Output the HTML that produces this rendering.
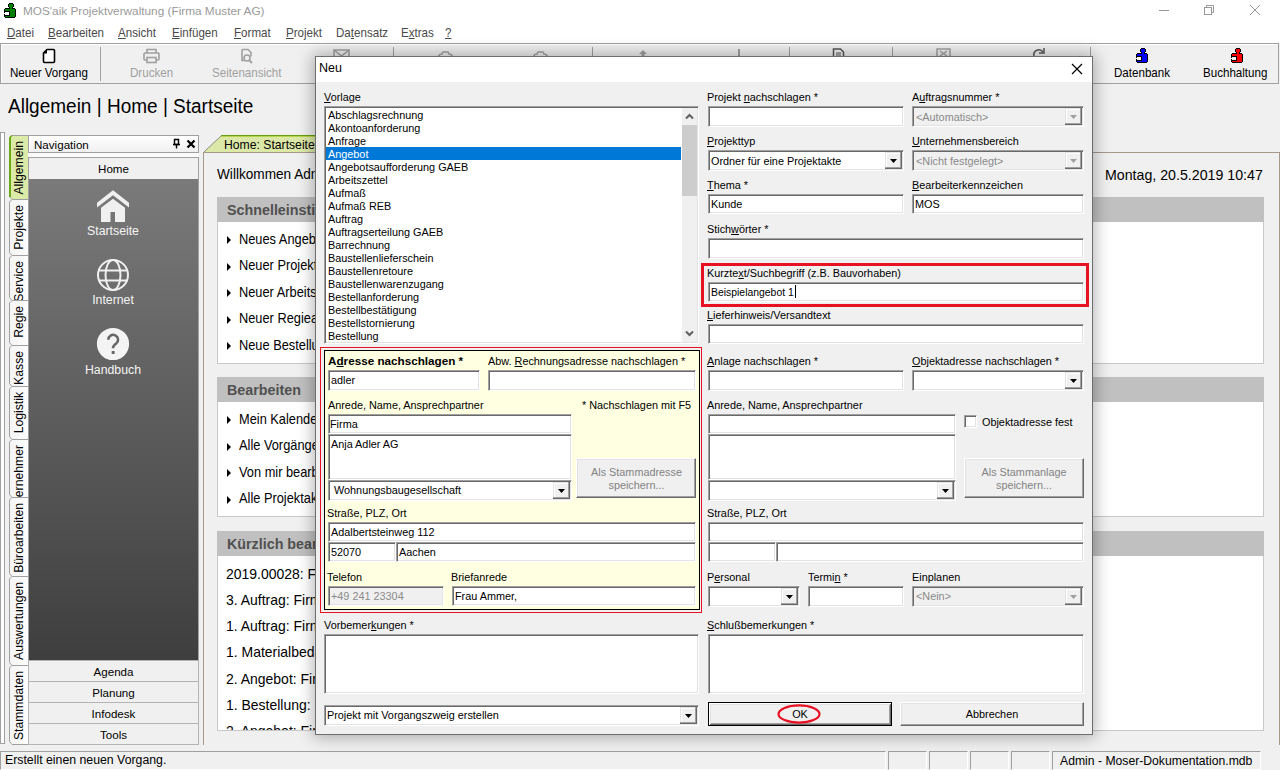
<!DOCTYPE html><html><head><meta charset="utf-8"><style>
*{margin:0;padding:0;box-sizing:border-box}
html,body{width:1280px;height:770px;overflow:hidden;background:#f0f0f0;font-family:"Liberation Sans",sans-serif;position:relative}
.a{position:absolute}
.t{position:absolute;white-space:nowrap}
.t u{text-decoration:underline;text-underline-offset:1px}
.sk{position:absolute;border:1px solid;border-color:#a0a0a0 #fff #fff #a0a0a0;box-shadow:inset 1px 1px 0 #696969, inset -1px -1px 0 #e3e3e3}
.cb{position:absolute;background:#f0f0f0;box-shadow:inset -1px -1px 0 #696969, inset -2px -2px 0 #a0a0a0, inset 1px 1px 0 #e3e3e3, inset 2px 2px 0 #fff}
.btn{position:absolute;background:#f0f0f0;border:1px solid}
</style></head><body>
<div class="a" style="left:0px;top:0px;width:1280px;height:22px;background:#fff"></div>
<svg class="a" style="left:4px;top:3px" width="12" height="15" viewBox="0 0 12 15" shape-rendering="crispEdges">
<path d="M5 0h4v1h1v3h-1v1h2v1h1v8h-1v1h-10v-1h-1v-8h1v-1h4v-1h-1v-3h1z" fill="#000"/>
<rect x="5" y="1" width="4" height="3" fill="#008000"/><rect x="6" y="4" width="2" height="2" fill="#008000"/><rect x="1" y="6" width="10" height="8" fill="#008000"/>
<rect x="1" y="8" width="5" height="5" fill="#000"/><rect x="1" y="9" width="4" height="3" fill="#fff"/><rect x="0" y="10" width="1" height="1" fill="#fff"/></svg>
<div class="t" style="left:23px;top:6.01px;font-size:11.8px;line-height:11.8px;color:#9a9a9a;">MOS'aik Projektverwaltung (Firma Muster AG)</div>
<div class="a" style="left:1159px;top:10px;width:10px;height:1px;background:#999"></div>
<svg class="a" style="left:1203px;top:4px" width="13" height="13" viewBox="0 0 13 13">
<rect x="1.5" y="3.5" width="7" height="7" fill="none" stroke="#999"/><path d="M3.5 3.5v-2h7v7h-2" fill="none" stroke="#999"/></svg>
<svg class="a" style="left:1249px;top:4px" width="13" height="13" viewBox="0 0 13 13">
<path d="M1 1L11 11M11 1L1 11" stroke="#999" stroke-width="1"/></svg>
<div class="a" style="left:0px;top:22px;width:1280px;height:21px;background:#fff"></div>
<div class="t" style="left:7px;top:26.67px;font-size:12.2px;line-height:12.2px;color:#4a4a4a;transform:scaleX(0.95);transform-origin:0 0"><u>D</u>atei</div>
<div class="t" style="left:48px;top:26.67px;font-size:12.2px;line-height:12.2px;color:#4a4a4a;transform:scaleX(0.95);transform-origin:0 0"><u>B</u>earbeiten</div>
<div class="t" style="left:118px;top:26.67px;font-size:12.2px;line-height:12.2px;color:#4a4a4a;transform:scaleX(0.95);transform-origin:0 0"><u>A</u>nsicht</div>
<div class="t" style="left:172px;top:26.67px;font-size:12.2px;line-height:12.2px;color:#4a4a4a;transform:scaleX(0.95);transform-origin:0 0"><u>E</u>infügen</div>
<div class="t" style="left:234px;top:26.67px;font-size:12.2px;line-height:12.2px;color:#4a4a4a;transform:scaleX(0.95);transform-origin:0 0"><u>F</u>ormat</div>
<div class="t" style="left:286px;top:26.67px;font-size:12.2px;line-height:12.2px;color:#4a4a4a;transform:scaleX(0.95);transform-origin:0 0"><u>P</u>rojekt</div>
<div class="t" style="left:336px;top:26.67px;font-size:12.2px;line-height:12.2px;color:#4a4a4a;transform:scaleX(0.95);transform-origin:0 0">Da<u>t</u>ensatz</div>
<div class="t" style="left:401px;top:26.67px;font-size:12.2px;line-height:12.2px;color:#4a4a4a;transform:scaleX(0.95);transform-origin:0 0">E<u>x</u>tras</div>
<div class="t" style="left:445px;top:26.67px;font-size:12.2px;line-height:12.2px;color:#4a4a4a;transform:scaleX(0.95);transform-origin:0 0"><u>?</u></div>
<div class="a" style="left:0px;top:43px;width:1279px;height:41px;border:1px solid #a0a0a0;background:#f0f0f0;box-shadow:inset 1px 1px 0 #fff"></div>
<svg class="a" style="left:42px;top:48px" width="14" height="16" viewBox="0 0 14 16">
<path d="M5 1.5h6.5a1 1 0 0 1 1 1v11a1 1 0 0 1-1 1h-9a1 1 0 0 1-1-1v-8.5z" fill="#fff" stroke="#000" stroke-width="1.6" stroke-linejoin="round"/>
<path d="M1.5 5.5l3.5-4v4z" fill="#000"/></svg>
<div class="t" style="left:10px;top:66.67px;font-size:12.2px;line-height:12.2px;color:#000;transform:scaleX(0.95);transform-origin:0 0">Neuer Vorgang</div>
<div class="a" style="left:100px;top:47px;width:1px;height:34px;background:#a0a0a0"></div>
<svg class="a" style="left:143px;top:48px" width="17" height="16" viewBox="0 0 17 16">
<path d="M4 5V1.5h9V5" fill="none" stroke="#a0a0a0" stroke-width="1.6"/>
<rect x="1" y="5" width="15" height="7" rx="1" fill="none" stroke="#a0a0a0" stroke-width="1.6"/>
<rect x="4" y="9.5" width="9" height="5" fill="#f0f0f0" stroke="#a0a0a0" stroke-width="1.6"/></svg>
<div class="t" style="left:130px;top:66.67px;font-size:12.2px;line-height:12.2px;color:#a0a0a0;transform:scaleX(0.95);transform-origin:0 0">Drucken</div>
<svg class="a" style="left:239px;top:48px" width="15" height="16" viewBox="0 0 15 16">
<path d="M3 1.5h6l3 3v4" fill="none" stroke="#a0a0a0" stroke-width="1.6"/><path d="M3 1.5v11h3" fill="none" stroke="#a0a0a0" stroke-width="1.6"/>
<circle cx="8" cy="10" r="3" fill="none" stroke="#a0a0a0" stroke-width="1.6"/><path d="M10 12l3 3" stroke="#a0a0a0" stroke-width="2"/></svg>
<div class="t" style="left:212px;top:66.67px;font-size:12.2px;line-height:12.2px;color:#a0a0a0;transform:scaleX(0.95);transform-origin:0 0">Seitenansicht</div>
<svg class="a" style="left:333px;top:49px" width="17" height="8" viewBox="0 0 17 8"><rect x="1" y="1" width="15" height="10" fill="none" stroke="#a0a0a0" stroke-width="1.5"/><path d="M1 1l7.5 6l7.5-6" fill="none" stroke="#a0a0a0" stroke-width="1.5"/></svg>
<div class="a" style="left:393px;top:47px;width:1px;height:34px;background:#a0a0a0"></div>
<div class="a" style="left:592px;top:47px;width:1px;height:34px;background:#a0a0a0"></div>
<div class="a" style="left:789px;top:47px;width:1px;height:34px;background:#a0a0a0"></div>
<div class="a" style="left:892px;top:47px;width:1px;height:34px;background:#a0a0a0"></div>
<div class="a" style="left:1090px;top:47px;width:1px;height:34px;background:#a0a0a0"></div>
<svg class="a" style="left:437px;top:51px" width="17" height="6" viewBox="0 0 17 6"><path d="M1 6c1-2 3-3 4-3l1-2h5l1 2c1 0 3 1 4 3" fill="none" stroke="#a0a0a0" stroke-width="1.5"/></svg>
<svg class="a" style="left:532px;top:51px" width="17" height="6" viewBox="0 0 17 6"><path d="M1 6c1-2 3-3 4-3l1-2h5l1 2c1 0 3 1 4 3" fill="none" stroke="#a0a0a0" stroke-width="1.5"/></svg>
<svg class="a" style="left:636px;top:49px" width="14" height="8" viewBox="0 0 14 8"><path d="M7 1l-4 4h2.5v3h3v-3h2.5z" fill="#a0a0a0"/></svg>
<div class="a" style="left:738px;top:49px;width:2px;height:8px;background:#a0a0a0"></div>
<svg class="a" style="left:832px;top:48px" width="13" height="9" viewBox="0 0 13 9"><path d="M1.5 9V1h7l3 3v5" fill="none" stroke="#555" stroke-width="1.5"/><path d="M4 5h5M4 7h5" stroke="#555"/></svg>
<svg class="a" style="left:936px;top:48px" width="15" height="9" viewBox="0 0 15 9"><rect x="1" y="1" width="13" height="9" fill="none" stroke="#a0a0a0" stroke-width="1.5"/><path d="M4 3l7 5M11 3l-7 5" stroke="#a0a0a0" stroke-width="1.5"/></svg>
<svg class="a" style="left:1031px;top:47px" width="16" height="10" viewBox="0 0 16 10"><path d="M3 9a5 5 0 0 1 9-4" fill="none" stroke="#555" stroke-width="1.5"/><path d="M13 1v5h-5" fill="none" stroke="#555" stroke-width="1.5"/></svg>
<svg class="a" style="left:1136px;top:48px" width="12" height="15" viewBox="0 0 12 15" shape-rendering="crispEdges">
<path d="M5 0h4v1h1v3h-1v1h2v1h1v8h-1v1h-10v-1h-1v-8h1v-1h4v-1h-1v-3h1z" fill="#000"/>
<rect x="5" y="1" width="4" height="3" fill="#0000ff"/><rect x="6" y="4" width="2" height="2" fill="#0000ff"/><rect x="1" y="6" width="10" height="8" fill="#0000ff"/>
<rect x="1" y="8" width="5" height="5" fill="#000"/><rect x="1" y="9" width="4" height="3" fill="#f0f0f0"/><rect x="0" y="10" width="1" height="1" fill="#f0f0f0"/></svg>
<svg class="a" style="left:1231px;top:48px" width="12" height="15" viewBox="0 0 12 15" shape-rendering="crispEdges">
<path d="M5 0h4v1h1v3h-1v1h2v1h1v8h-1v1h-10v-1h-1v-8h1v-1h4v-1h-1v-3h1z" fill="#000"/>
<rect x="5" y="1" width="4" height="3" fill="#ff0000"/><rect x="6" y="4" width="2" height="2" fill="#ff0000"/><rect x="1" y="6" width="10" height="8" fill="#ff0000"/>
<rect x="1" y="8" width="5" height="5" fill="#000"/><rect x="1" y="9" width="4" height="3" fill="#f0f0f0"/><rect x="0" y="10" width="1" height="1" fill="#f0f0f0"/></svg>
<div class="t" style="left:1114px;top:66.67px;font-size:12.2px;line-height:12.2px;color:#000;transform:scaleX(0.95);transform-origin:0 0">Datenbank</div>
<div class="t" style="left:1203px;top:66.67px;font-size:12.2px;line-height:12.2px;color:#000;transform:scaleX(0.95);transform-origin:0 0">Buchhaltung</div>
<div class="t" style="left:8px;top:96.07px;font-size:20px;line-height:20px;color:#000;transform:scaleX(0.95);transform-origin:0 0">Allgemein | Home | Startseite</div>
<div class="a" style="left:0px;top:132px;width:5px;height:612px;border:1px solid #a0a0a0;background:#fff"></div>
<svg class="a" style="left:8px;top:135px" width="21" height="65" viewBox="0 0 21 65"><defs><linearGradient id="tg" x1="0" x2="1" y1="0" y2="0"><stop offset="0" stop-color="#f4f4f4"/><stop offset="1" stop-color="#fdfdfd"/></linearGradient></defs><path d="M20.5 0.5H4L1.5 3V61.5L4 64.5H20.5" fill="#dceaa8" stroke="#a0a0a0"/><path d="M2 2.5V62" stroke="#6aaa18" stroke-width="2"/><path d="M4 0.6L1.5 3" stroke="#6aaa18" stroke-width="1.4"/></svg>
<div class="a" style="left:9px;top:135px;width:19px;height:65px;overflow:hidden"><div class="a" style="left:-1px;top:65px;width:65px;height:19px;transform-origin:0 0;transform:rotate(-90deg);display:flex;justify-content:flex-end;padding-right:6px;font-size:12.2px;line-height:19px;padding-top:2.1px;white-space:nowrap;color:#000;overflow:hidden">Allgemein</div></div>
<svg class="a" style="left:8px;top:199px" width="21" height="57" viewBox="0 0 21 57"><defs><linearGradient id="tg" x1="0" x2="1" y1="0" y2="0"><stop offset="0" stop-color="#f4f4f4"/><stop offset="1" stop-color="#fdfdfd"/></linearGradient></defs><path d="M20.5 0.5H4L1.5 3V53.5L4 56.5H20.5" fill="url(#tg)" stroke="#a0a0a0"/></svg>
<div class="a" style="left:9px;top:199px;width:19px;height:57px;overflow:hidden"><div class="a" style="left:-1px;top:57px;width:57px;height:19px;transform-origin:0 0;transform:rotate(-90deg);display:flex;justify-content:flex-end;padding-right:6px;font-size:12.2px;line-height:19px;padding-top:2.1px;white-space:nowrap;color:#000;overflow:hidden">Projekte</div></div>
<svg class="a" style="left:8px;top:255px" width="21" height="46" viewBox="0 0 21 46"><defs><linearGradient id="tg" x1="0" x2="1" y1="0" y2="0"><stop offset="0" stop-color="#f4f4f4"/><stop offset="1" stop-color="#fdfdfd"/></linearGradient></defs><path d="M20.5 0.5H4L1.5 3V42.5L4 45.5H20.5" fill="url(#tg)" stroke="#a0a0a0"/></svg>
<div class="a" style="left:9px;top:255px;width:19px;height:46px;overflow:hidden"><div class="a" style="left:-1px;top:46px;width:46px;height:19px;transform-origin:0 0;transform:rotate(-90deg);display:flex;justify-content:flex-end;padding-right:6px;font-size:12.2px;line-height:19px;padding-top:2.1px;white-space:nowrap;color:#000;overflow:hidden">Service</div></div>
<svg class="a" style="left:8px;top:300px" width="21" height="46" viewBox="0 0 21 46"><defs><linearGradient id="tg" x1="0" x2="1" y1="0" y2="0"><stop offset="0" stop-color="#f4f4f4"/><stop offset="1" stop-color="#fdfdfd"/></linearGradient></defs><path d="M20.5 0.5H4L1.5 3V42.5L4 45.5H20.5" fill="url(#tg)" stroke="#a0a0a0"/></svg>
<div class="a" style="left:9px;top:300px;width:19px;height:46px;overflow:hidden"><div class="a" style="left:-1px;top:46px;width:46px;height:19px;transform-origin:0 0;transform:rotate(-90deg);display:flex;justify-content:flex-end;padding-right:6px;font-size:12.2px;line-height:19px;padding-top:2.1px;white-space:nowrap;color:#000;overflow:hidden">Regie</div></div>
<svg class="a" style="left:8px;top:345px" width="21" height="42" viewBox="0 0 21 42"><defs><linearGradient id="tg" x1="0" x2="1" y1="0" y2="0"><stop offset="0" stop-color="#f4f4f4"/><stop offset="1" stop-color="#fdfdfd"/></linearGradient></defs><path d="M20.5 0.5H4L1.5 3V38.5L4 41.5H20.5" fill="url(#tg)" stroke="#a0a0a0"/></svg>
<div class="a" style="left:9px;top:345px;width:19px;height:42px;overflow:hidden"><div class="a" style="left:-1px;top:42px;width:42px;height:19px;transform-origin:0 0;transform:rotate(-90deg);display:flex;justify-content:flex-end;padding-right:6px;font-size:12.2px;line-height:19px;padding-top:2.1px;white-space:nowrap;color:#000;overflow:hidden">Kasse</div></div>
<svg class="a" style="left:8px;top:386px" width="21" height="54" viewBox="0 0 21 54"><defs><linearGradient id="tg" x1="0" x2="1" y1="0" y2="0"><stop offset="0" stop-color="#f4f4f4"/><stop offset="1" stop-color="#fdfdfd"/></linearGradient></defs><path d="M20.5 0.5H4L1.5 3V50.5L4 53.5H20.5" fill="url(#tg)" stroke="#a0a0a0"/></svg>
<div class="a" style="left:9px;top:386px;width:19px;height:54px;overflow:hidden"><div class="a" style="left:-1px;top:54px;width:54px;height:19px;transform-origin:0 0;transform:rotate(-90deg);display:flex;justify-content:flex-end;padding-right:6px;font-size:12.2px;line-height:19px;padding-top:2.1px;white-space:nowrap;color:#000;overflow:hidden">Logistik</div></div>
<svg class="a" style="left:8px;top:439px" width="21" height="59" viewBox="0 0 21 59"><defs><linearGradient id="tg" x1="0" x2="1" y1="0" y2="0"><stop offset="0" stop-color="#f4f4f4"/><stop offset="1" stop-color="#fdfdfd"/></linearGradient></defs><path d="M20.5 0.5H4L1.5 3V55.5L4 58.5H20.5" fill="url(#tg)" stroke="#a0a0a0"/></svg>
<div class="a" style="left:9px;top:439px;width:19px;height:59px;overflow:hidden"><div class="a" style="left:-1px;top:59px;width:59px;height:19px;transform-origin:0 0;transform:rotate(-90deg);display:flex;justify-content:flex-end;padding-right:6px;font-size:12.2px;line-height:19px;padding-top:2.1px;white-space:nowrap;color:#000;overflow:hidden">Unternehmer</div></div>
<svg class="a" style="left:8px;top:497px" width="21" height="80" viewBox="0 0 21 80"><defs><linearGradient id="tg" x1="0" x2="1" y1="0" y2="0"><stop offset="0" stop-color="#f4f4f4"/><stop offset="1" stop-color="#fdfdfd"/></linearGradient></defs><path d="M20.5 0.5H4L1.5 3V76.5L4 79.5H20.5" fill="url(#tg)" stroke="#a0a0a0"/></svg>
<div class="a" style="left:9px;top:497px;width:19px;height:80px;overflow:hidden"><div class="a" style="left:-1px;top:80px;width:80px;height:19px;transform-origin:0 0;transform:rotate(-90deg);display:flex;justify-content:flex-end;padding-right:6px;font-size:12.2px;line-height:19px;padding-top:2.1px;white-space:nowrap;color:#000;overflow:hidden">Büroarbeiten</div></div>
<svg class="a" style="left:8px;top:576px" width="21" height="90" viewBox="0 0 21 90"><defs><linearGradient id="tg" x1="0" x2="1" y1="0" y2="0"><stop offset="0" stop-color="#f4f4f4"/><stop offset="1" stop-color="#fdfdfd"/></linearGradient></defs><path d="M20.5 0.5H4L1.5 3V86.5L4 89.5H20.5" fill="url(#tg)" stroke="#a0a0a0"/></svg>
<div class="a" style="left:9px;top:576px;width:19px;height:90px;overflow:hidden"><div class="a" style="left:-1px;top:90px;width:90px;height:19px;transform-origin:0 0;transform:rotate(-90deg);display:flex;justify-content:flex-end;padding-right:6px;font-size:12.2px;line-height:19px;padding-top:2.1px;white-space:nowrap;color:#000;overflow:hidden">Auswertungen</div></div>
<svg class="a" style="left:8px;top:665px" width="21" height="80" viewBox="0 0 21 80"><defs><linearGradient id="tg" x1="0" x2="1" y1="0" y2="0"><stop offset="0" stop-color="#f4f4f4"/><stop offset="1" stop-color="#fdfdfd"/></linearGradient></defs><path d="M20.5 0.5H4L1.5 3V76.5L4 79.5H20.5" fill="url(#tg)" stroke="#a0a0a0"/></svg>
<div class="a" style="left:9px;top:665px;width:19px;height:80px;overflow:hidden"><div class="a" style="left:-1px;top:80px;width:80px;height:19px;transform-origin:0 0;transform:rotate(-90deg);display:flex;justify-content:flex-end;padding-right:6px;font-size:12.2px;line-height:19px;padding-top:2.1px;white-space:nowrap;color:#000;overflow:hidden">Stammdaten</div></div>
<div class="a" style="left:28px;top:135px;width:171px;height:18px;border:1px solid #a0a0a0;background:linear-gradient(#fff,#f0f0f0);box-shadow:inset 1px 1px 0 #fff"></div>
<div class="t" style="left:34px;top:138.88px;font-size:11.6px;line-height:11.6px;color:#000;">Navigation</div>
<svg class="a" style="left:172px;top:138px" width="9" height="11" viewBox="0 0 9 11"><path d="M2.5 1.5h4v5h-4z" fill="none" stroke="#000" stroke-width="1.4"/><path d="M1 6.5h7M4.5 6.5v4" stroke="#000" stroke-width="1.4"/></svg>
<svg class="a" style="left:186px;top:139px" width="10" height="10" viewBox="0 0 10 10"><path d="M1.5 1.5l7 7M8.5 1.5l-7 7" stroke="#000" stroke-width="2.2"/></svg>
<div class="a" style="left:28px;top:153px;width:171px;height:4px;background:#fafafa"></div>
<div class="a" style="left:28px;top:157px;width:171px;height:22px;border:1px solid #a0a0a0;border-bottom:none;background:#f0f0f0"></div>
<div class="t" style="left:28px;width:171px;text-align:center;top:162.68px;font-size:11.6px;line-height:11.6px;color:#000;">Home</div>
<div class="a" style="left:28px;top:179px;width:171px;height:481px;background:linear-gradient(#7a7a7a,#3e3e3e);border-left:1px solid #a0a0a0;border-right:1px solid #a0a0a0"></div>
<svg class="a" style="left:96px;top:189px" width="34" height="34" viewBox="0 0 34 34">
<path d="M1 13.8L17 1.2L33 13.8V18.6L17 6.2L1 18.6Z" fill="#f0f0f0"/>
<path d="M5 18.8L17 9.8L29 18.8V33H19V23H14.5V33H5Z" fill="#f0f0f0"/></svg>
<div class="t" style="left:60px;width:106px;text-align:center;top:225.39px;font-size:12.3px;line-height:12.3px;color:#f4f4f4;">Startseite</div>
<svg class="a" style="left:96px;top:258px" width="34" height="34" viewBox="0 0 34 34" fill="none" stroke="#f0f0f0" stroke-width="2">
<circle cx="17" cy="17" r="15"/><ellipse cx="17" cy="17" rx="7.5" ry="15"/><path d="M2.5 12.6h29M2.5 22.6h29"/></svg>
<div class="t" style="left:60px;width:106px;text-align:center;top:294.29px;font-size:12.3px;line-height:12.3px;color:#f4f4f4;">Internet</div>
<svg class="a" style="left:96px;top:327px" width="34" height="34" viewBox="0 0 34 34">
<circle cx="17" cy="17" r="16.1" fill="#f4f4f4"/>
<path d="M12.3 12.8A4.9 4.9 0 1 1 20.2 16.6C18 18.2 17 19.2 17 21.2" fill="none" stroke="#666" stroke-width="2.5"/>
<rect x="15.7" y="24" width="2.9" height="3" fill="#666"/></svg>
<div class="t" style="left:60px;width:106px;text-align:center;top:363.59px;font-size:12.3px;line-height:12.3px;color:#f4f4f4;">Handbuch</div>
<div class="a" style="left:28px;top:660px;width:171px;height:21px;border:1px solid #b4b4b4;border-bottom:none;background:#f0f0f0"></div>
<div class="t" style="left:28px;width:171px;text-align:center;top:666.18px;font-size:11.6px;line-height:11.6px;color:#000;">Agenda</div>
<div class="a" style="left:28px;top:681px;width:171px;height:21px;border:1px solid #b4b4b4;border-bottom:none;background:#f0f0f0"></div>
<div class="t" style="left:28px;width:171px;text-align:center;top:687.18px;font-size:11.6px;line-height:11.6px;color:#000;">Planung</div>
<div class="a" style="left:28px;top:702px;width:171px;height:21px;border:1px solid #b4b4b4;border-bottom:none;background:#f0f0f0"></div>
<div class="t" style="left:28px;width:171px;text-align:center;top:708.18px;font-size:11.6px;line-height:11.6px;color:#000;">Infodesk</div>
<div class="a" style="left:28px;top:723px;width:171px;height:22px;border:1px solid #b4b4b4;background:#f0f0f0"></div>
<div class="t" style="left:28px;width:171px;text-align:center;top:729.18px;font-size:11.6px;line-height:11.6px;color:#000;">Tools</div>
<svg class="a" style="left:203px;top:134px" width="120" height="19" viewBox="0 0 120 19">
<path d="M0.5 18.5L19 1H120V18.5Z" fill="#dce8a8"/>
<path d="M0.5 18.5L19 1" stroke="#8a8a80" stroke-width="1"/>
<rect x="18.5" y="1" width="102" height="1" fill="#6a9e10"/><rect x="18" y="2" width="102" height="1" fill="#b5d54a"/></svg>
<div class="t" style="left:224px;top:138.67px;font-size:12.2px;line-height:12.2px;color:#000;">Home: Startseite</div>
<div class="a" style="left:203px;top:152px;width:1077px;height:593px;border:1px solid #a49a8c;border-bottom:none;background:#f0f0f0"></div>
<div class="t" style="left:217px;top:167.48px;font-size:14.2px;line-height:14.2px;color:#000;transform:scaleX(0.96);transform-origin:0 0">Willkommen Admin</div>
<div class="t" style="left:1105px;top:167.68px;font-size:14.2px;line-height:14.2px;color:#000;">Montag, 20.5.2019 10:47</div>
<div class="a" style="left:217px;top:197px;width:1047px;height:167px;border:1px solid #c8c8c8;background:#fff;overflow:hidden"></div>
<div class="a" style="left:217px;top:197px;width:1047px;height:25px;background:#c0c0c0"></div>
<div class="t" style="left:227px;top:202.90px;font-size:14.3px;line-height:14.3px;color:#505050;font-weight:bold;">Schnelleinstieg</div>
<div class="a" style="left:227px;top:236.0px;width:0;height:0;border-top:4px solid transparent;border-bottom:4px solid transparent;border-left:4px solid #000"></div>
<div class="t" style="left:239px;top:231.81px;font-size:14.4px;line-height:14.4px;color:#000;transform:scaleX(0.89);transform-origin:0 0">Neues Angebot</div>
<div class="a" style="left:227px;top:262.5px;width:0;height:0;border-top:4px solid transparent;border-bottom:4px solid transparent;border-left:4px solid #000"></div>
<div class="t" style="left:239px;top:258.31px;font-size:14.4px;line-height:14.4px;color:#000;transform:scaleX(0.89);transform-origin:0 0">Neuer Projektordner</div>
<div class="a" style="left:227px;top:289.0px;width:0;height:0;border-top:4px solid transparent;border-bottom:4px solid transparent;border-left:4px solid #000"></div>
<div class="t" style="left:239px;top:284.81px;font-size:14.4px;line-height:14.4px;color:#000;transform:scaleX(0.89);transform-origin:0 0">Neuer Arbeitszettel</div>
<div class="a" style="left:227px;top:315.5px;width:0;height:0;border-top:4px solid transparent;border-bottom:4px solid transparent;border-left:4px solid #000"></div>
<div class="t" style="left:239px;top:311.31px;font-size:14.4px;line-height:14.4px;color:#000;transform:scaleX(0.89);transform-origin:0 0">Neuer Regieauftrag</div>
<div class="a" style="left:227px;top:342.0px;width:0;height:0;border-top:4px solid transparent;border-bottom:4px solid transparent;border-left:4px solid #000"></div>
<div class="t" style="left:239px;top:337.81px;font-size:14.4px;line-height:14.4px;color:#000;transform:scaleX(0.89);transform-origin:0 0">Neue Bestellung</div>
<div class="a" style="left:217px;top:377px;width:1047px;height:140px;border:1px solid #c8c8c8;background:#fff;overflow:hidden"></div>
<div class="a" style="left:217px;top:377px;width:1047px;height:25px;background:#c0c0c0"></div>
<div class="t" style="left:227px;top:382.90px;font-size:14.3px;line-height:14.3px;color:#505050;font-weight:bold;">Bearbeiten</div>
<div class="a" style="left:227px;top:416.0px;width:0;height:0;border-top:4px solid transparent;border-bottom:4px solid transparent;border-left:4px solid #000"></div>
<div class="t" style="left:239px;top:411.81px;font-size:14.4px;line-height:14.4px;color:#000;transform:scaleX(0.89);transform-origin:0 0">Mein Kalender</div>
<div class="a" style="left:227px;top:442.5px;width:0;height:0;border-top:4px solid transparent;border-bottom:4px solid transparent;border-left:4px solid #000"></div>
<div class="t" style="left:239px;top:438.31px;font-size:14.4px;line-height:14.4px;color:#000;transform:scaleX(0.89);transform-origin:0 0">Alle Vorgänge</div>
<div class="a" style="left:227px;top:469.0px;width:0;height:0;border-top:4px solid transparent;border-bottom:4px solid transparent;border-left:4px solid #000"></div>
<div class="t" style="left:239px;top:464.81px;font-size:14.4px;line-height:14.4px;color:#000;transform:scaleX(0.89);transform-origin:0 0">Von mir bearbeitet</div>
<div class="a" style="left:227px;top:495.5px;width:0;height:0;border-top:4px solid transparent;border-bottom:4px solid transparent;border-left:4px solid #000"></div>
<div class="t" style="left:239px;top:491.31px;font-size:14.4px;line-height:14.4px;color:#000;transform:scaleX(0.89);transform-origin:0 0">Alle Projektakten</div>
<div class="a" style="left:217px;top:531px;width:1047px;height:200px;border:1px solid #c8c8c8;background:#fff;overflow:hidden"></div>
<div class="a" style="left:217px;top:531px;width:1047px;height:25px;background:#c0c0c0"></div>
<div class="t" style="left:227px;top:536.90px;font-size:14.3px;line-height:14.3px;color:#505050;font-weight:bold;">Kürzlich bearbeitet</div>
<div class="t" style="left:226px;top:566.51px;font-size:14.4px;line-height:14.4px;color:#000;transform:scaleX(0.97);transform-origin:0 0">2019.00028: Firma</div>
<div class="t" style="left:226px;top:592.81px;font-size:14.4px;line-height:14.4px;color:#000;transform:scaleX(0.97);transform-origin:0 0">3. Auftrag: Firma</div>
<div class="t" style="left:226px;top:619.11px;font-size:14.4px;line-height:14.4px;color:#000;transform:scaleX(0.97);transform-origin:0 0">1. Auftrag: Firma</div>
<div class="t" style="left:226px;top:645.41px;font-size:14.4px;line-height:14.4px;color:#000;transform:scaleX(0.97);transform-origin:0 0">1. Materialbedarf</div>
<div class="t" style="left:226px;top:671.71px;font-size:14.4px;line-height:14.4px;color:#000;transform:scaleX(0.97);transform-origin:0 0">2. Angebot: Firma</div>
<div class="t" style="left:226px;top:698.01px;font-size:14.4px;line-height:14.4px;color:#000;transform:scaleX(0.97);transform-origin:0 0">1. Bestellung: Firma</div>
<div class="t" style="left:226px;top:724.31px;font-size:14.4px;line-height:14.4px;color:#000;transform:scaleX(0.97);transform-origin:0 0">2. Angebot: Firma</div>
<div class="a" style="left:217px;top:731px;width:1047px;height:13px;background:#f0f0f0"></div>
<div class="a" style="left:217px;top:730px;width:1047px;height:1px;background:#c8c8c8"></div>
<div class="a" style="left:0px;top:750px;width:1280px;height:20px;background:#f0f0f0"></div>
<div class="t" style="left:5px;top:754.29px;font-size:12.3px;line-height:12.3px;color:#000;">Erstellt einen neuen Vorgang.</div>
<div class="a" style="left:888px;top:751px;width:39px;height:19px;border:1px solid;border-color:#a0a0a0 #fff #fff #a0a0a0"></div>
<div class="a" style="left:929px;top:751px;width:39px;height:19px;border:1px solid;border-color:#a0a0a0 #fff #fff #a0a0a0"></div>
<div class="a" style="left:970px;top:751px;width:39px;height:19px;border:1px solid;border-color:#a0a0a0 #fff #fff #a0a0a0"></div>
<div class="a" style="left:1011px;top:751px;width:39px;height:19px;border:1px solid;border-color:#a0a0a0 #fff #fff #a0a0a0"></div>
<div class="a" style="left:1052px;top:751px;width:209px;height:19px;border:1px solid;border-color:#a0a0a0 #fff #fff #a0a0a0"></div>
<div class="a" style="left:0px;top:751px;width:886px;height:19px;border:1px solid;border-color:#a0a0a0 #fff #fff #a0a0a0"></div>
<div class="t" style="left:1060px;top:754.67px;font-size:12.2px;line-height:12.2px;color:#000;">Admin - Moser-Dokumentation.mdb</div>
<div class="a" style="left:315px;top:56px;width:778px;height:679px;box-shadow:0 0 15px 2px rgba(0,0,0,0.3)"></div>
<div class="a" style="left:315px;top:56px;width:778px;height:679px;border:1px solid #6e6e6e;background:#f0f0f0"></div>
<div class="a" style="left:316px;top:57px;width:776px;height:25px;background:#fff"></div>
<div class="t" style="left:319px;top:62.42px;font-size:12.5px;line-height:12.5px;color:#000;">Neu</div>
<svg class="a" style="left:1071px;top:63px" width="12" height="12" viewBox="0 0 12 12"><path d="M1 1L11 11M11 1L1 11" stroke="#000" stroke-width="1.2"/></svg>
<div class="t" style="left:324px;top:91.82px;font-size:10.85px;line-height:10.85px;color:#000;"><u>V</u>orlage</div>
<div class="sk" style="left:324px;top:106px;width:375px;height:238px;background:#fff"></div>
<div class="t" style="left:328px;top:110.42px;font-size:10.85px;line-height:10.85px;color:#000;">Abschlagsrechnung</div>
<div class="t" style="left:328px;top:123.42px;font-size:10.85px;line-height:10.85px;color:#000;">Akontoanforderung</div>
<div class="t" style="left:328px;top:136.42px;font-size:10.85px;line-height:10.85px;color:#000;">Anfrage</div>
<div class="a" style="left:326px;top:147px;width:355px;height:13px;background:#0078d7"></div>
<div class="t" style="left:328px;top:149.42px;font-size:10.85px;line-height:10.85px;color:#fff;">Angebot</div>
<div class="t" style="left:328px;top:162.42px;font-size:10.85px;line-height:10.85px;color:#000;">Angebotsaufforderung GAEB</div>
<div class="t" style="left:328px;top:175.42px;font-size:10.85px;line-height:10.85px;color:#000;">Arbeitszettel</div>
<div class="t" style="left:328px;top:188.42px;font-size:10.85px;line-height:10.85px;color:#000;">Aufmaß</div>
<div class="t" style="left:328px;top:201.42px;font-size:10.85px;line-height:10.85px;color:#000;">Aufmaß REB</div>
<div class="t" style="left:328px;top:214.42px;font-size:10.85px;line-height:10.85px;color:#000;">Auftrag</div>
<div class="t" style="left:328px;top:227.42px;font-size:10.85px;line-height:10.85px;color:#000;">Auftragserteilung GAEB</div>
<div class="t" style="left:328px;top:240.42px;font-size:10.85px;line-height:10.85px;color:#000;">Barrechnung</div>
<div class="t" style="left:328px;top:253.42px;font-size:10.85px;line-height:10.85px;color:#000;">Baustellenlieferschein</div>
<div class="t" style="left:328px;top:266.42px;font-size:10.85px;line-height:10.85px;color:#000;">Baustellenretoure</div>
<div class="t" style="left:328px;top:279.42px;font-size:10.85px;line-height:10.85px;color:#000;">Baustellenwarenzugang</div>
<div class="t" style="left:328px;top:292.42px;font-size:10.85px;line-height:10.85px;color:#000;">Bestellanforderung</div>
<div class="t" style="left:328px;top:305.42px;font-size:10.85px;line-height:10.85px;color:#000;">Bestellbestätigung</div>
<div class="t" style="left:328px;top:318.42px;font-size:10.85px;line-height:10.85px;color:#000;">Bestellstornierung</div>
<div class="t" style="left:328px;top:331.42px;font-size:10.85px;line-height:10.85px;color:#000;">Bestellung</div>
<div class="a" style="left:682px;top:108px;width:15px;height:234px;background:#f0f0f0"></div>
<div class="a" style="left:682px;top:125px;width:15px;height:71px;background:#cdcdcd"></div>
<svg class="a" style="left:684px;top:112px" width="12" height="9" viewBox="0 0 12 9"><path d="M2 6.5L5.5 3L9 6.5" fill="none" stroke="#606060" stroke-width="2"/></svg>
<svg class="a" style="left:684px;top:329px" width="12" height="9" viewBox="0 0 12 9"><path d="M2 2.5L5.5 6L9 2.5" fill="none" stroke="#606060" stroke-width="2"/></svg>
<div class="a" style="left:320px;top:347px;width:382px;height:266px;border:1px solid #e81123"></div>
<div class="a" style="left:324px;top:350px;width:376px;height:260px;border:1px solid #000;background:#ffffe1"></div>
<div class="t" style="left:328px;top:355.10px;font-size:11.7px;line-height:11.7px;color:#000;font-weight:bold;">A<u>d</u>resse nachschlagen *</div>
<div class="t" style="left:488px;top:355.82px;font-size:10.85px;line-height:10.85px;color:#000;">Abw. <u>R</u>echnungsadresse nachschlagen *</div>
<div class="sk" style="left:328px;top:370px;width:152px;height:21px;background:#fff"></div>
<div class="t" style="left:331px;top:374.82px;font-size:10.85px;line-height:10.85px;color:#000;">adler</div>
<div class="sk" style="left:488px;top:370px;width:208px;height:21px;background:#fff"></div>
<div class="t" style="left:328px;top:399.82px;font-size:10.85px;line-height:10.85px;color:#000;">Anrede, Name, Ansprechpartner</div>
<div class="t" style="left:582px;top:399.82px;font-size:10.85px;line-height:10.85px;color:#000;">* Nachschlagen mit F5</div>
<div class="sk" style="left:328px;top:414px;width:244px;height:20px;background:#fff"></div>
<div class="t" style="left:330px;top:418.82px;font-size:10.85px;line-height:10.85px;color:#000;">Firma</div>
<div class="sk" style="left:328px;top:434px;width:244px;height:46px;background:#fff"></div>
<div class="t" style="left:331px;top:438.82px;font-size:10.85px;line-height:10.85px;color:#000;">Anja Adler AG</div>
<div class="sk" style="left:328px;top:480px;width:244px;height:21px;background:#fff"></div>
<div class="cb" style="left:553px;top:482px;width:17px;height:17px"></div>
<svg class="a" style="left:558px;top:489px" width="7" height="4" viewBox="0 0 7 4"><path d="M0 0H7L3.5 4Z" fill="#000"/></svg>
<div class="t" style="left:334px;top:484.82px;font-size:10.85px;line-height:10.85px;color:#000;">Wohnungsbaugesellschaft</div>
<div class="btn" style="left:576px;top:458px;width:120px;height:40px;border-color:#fff #696969 #696969 #fff;box-shadow:inset -1px -1px 0 #a0a0a0, inset 1px 1px 0 #e3e3e3"></div>
<div class="t" style="left:576px;width:121px;text-align:center;top:467.32px;font-size:10.85px;line-height:10.85px;color:#838383;">Als Stammadresse</div>
<div class="t" style="left:576px;width:121px;text-align:center;top:479.82px;font-size:10.85px;line-height:10.85px;color:#838383;">speichern...</div>
<div class="t" style="left:327px;top:507.82px;font-size:10.85px;line-height:10.85px;color:#000;">Straße, PLZ, Ort</div>
<div class="sk" style="left:328px;top:522px;width:368px;height:20px;background:#fff"></div>
<div class="t" style="left:331px;top:526.82px;font-size:10.85px;line-height:10.85px;color:#000;">Adalbertsteinweg 112</div>
<div class="sk" style="left:328px;top:542px;width:68px;height:20px;background:#fff"></div>
<div class="t" style="left:331px;top:546.82px;font-size:10.85px;line-height:10.85px;color:#000;">52070</div>
<div class="sk" style="left:396px;top:542px;width:300px;height:20px;background:#fff"></div>
<div class="t" style="left:399px;top:546.82px;font-size:10.85px;line-height:10.85px;color:#000;">Aachen</div>
<div class="t" style="left:327px;top:571.82px;font-size:10.85px;line-height:10.85px;color:#000;">Telefon</div>
<div class="t" style="left:451px;top:571.82px;font-size:10.85px;line-height:10.85px;color:#000;">Briefanrede</div>
<div class="sk" style="left:328px;top:586px;width:116px;height:20px;background:#f0f0f0"></div>
<div class="t" style="left:331px;top:590.82px;font-size:10.85px;line-height:10.85px;color:#8a8a8a;">+49 241 23304</div>
<div class="sk" style="left:452px;top:586px;width:244px;height:20px;background:#fff"></div>
<div class="t" style="left:455px;top:590.82px;font-size:10.85px;line-height:10.85px;color:#000;">Frau Ammer,</div>
<div class="t" style="left:324px;top:619.82px;font-size:10.85px;line-height:10.85px;color:#000;">Vorbemer<u>k</u>ungen *</div>
<div class="sk" style="left:324px;top:634px;width:375px;height:60px;background:#fff"></div>
<div class="sk" style="left:324px;top:705px;width:375px;height:21px;background:#fff"></div>
<div class="cb" style="left:680px;top:707px;width:17px;height:17px"></div>
<svg class="a" style="left:685px;top:714px" width="7" height="4" viewBox="0 0 7 4"><path d="M0 0H7L3.5 4Z" fill="#000"/></svg>
<div class="t" style="left:327px;top:709.82px;font-size:10.85px;line-height:10.85px;color:#000;">Projekt mit Vorgangszweig erstellen</div>
<div class="t" style="left:707px;top:91.82px;font-size:10.85px;line-height:10.85px;color:#000;">Projekt <u>n</u>achschlagen *</div>
<div class="t" style="left:912px;top:91.82px;font-size:10.85px;line-height:10.85px;color:#000;">A<u>u</u>ftragsnummer *</div>
<div class="sk" style="left:708px;top:106px;width:196px;height:21px;background:#fff"></div>
<div class="sk" style="left:912px;top:106px;width:172px;height:21px;background:#f0f0f0"></div>
<div class="cb" style="left:1065px;top:108px;width:17px;height:17px"></div>
<svg class="a" style="left:1070px;top:115px" width="7" height="4" viewBox="0 0 7 4"><path d="M0 0H7L3.5 4Z" fill="#a0a0a0"/></svg>
<div class="t" style="left:916px;top:111.82px;font-size:10.85px;line-height:10.85px;color:#8a8a8a;">&lt;Automatisch&gt;</div>
<div class="t" style="left:707px;top:135.82px;font-size:10.85px;line-height:10.85px;color:#000;"><u>P</u>rojekttyp</div>
<div class="t" style="left:912px;top:135.82px;font-size:10.85px;line-height:10.85px;color:#000;"><u>U</u>nternehmensbereich</div>
<div class="sk" style="left:708px;top:150px;width:196px;height:21px;background:#fff"></div>
<div class="cb" style="left:885px;top:152px;width:17px;height:17px"></div>
<svg class="a" style="left:890px;top:159px" width="7" height="4" viewBox="0 0 7 4"><path d="M0 0H7L3.5 4Z" fill="#000"/></svg>
<div class="t" style="left:711px;top:155.82px;font-size:10.85px;line-height:10.85px;color:#000;">Ordner für eine Projektakte</div>
<div class="sk" style="left:912px;top:150px;width:172px;height:21px;background:#f0f0f0"></div>
<div class="cb" style="left:1065px;top:152px;width:17px;height:17px"></div>
<svg class="a" style="left:1070px;top:159px" width="7" height="4" viewBox="0 0 7 4"><path d="M0 0H7L3.5 4Z" fill="#a0a0a0"/></svg>
<div class="t" style="left:916px;top:155.82px;font-size:10.85px;line-height:10.85px;color:#8a8a8a;">&lt;Nicht festgelegt&gt;</div>
<div class="t" style="left:707px;top:179.82px;font-size:10.85px;line-height:10.85px;color:#000;"><u>T</u>hema *</div>
<div class="t" style="left:912px;top:179.82px;font-size:10.85px;line-height:10.85px;color:#000;"><u>B</u>earbeiterkennzeichen</div>
<div class="sk" style="left:708px;top:194px;width:196px;height:20px;background:#fff"></div>
<div class="t" style="left:711px;top:198.82px;font-size:10.85px;line-height:10.85px;color:#000;">Kunde</div>
<div class="sk" style="left:912px;top:194px;width:172px;height:20px;background:#fff"></div>
<div class="t" style="left:915px;top:198.82px;font-size:10.85px;line-height:10.85px;color:#000;">MOS</div>
<div class="t" style="left:707px;top:223.82px;font-size:10.85px;line-height:10.85px;color:#000;">Stich<u>w</u>örter *</div>
<div class="sk" style="left:708px;top:238px;width:376px;height:21px;background:#fff"></div>
<div class="a" style="left:701px;top:263px;width:388px;height:44px;border:3px solid #e81123"></div>
<div class="t" style="left:707px;top:267.82px;font-size:10.85px;line-height:10.85px;color:#000;">Kurzte<u>x</u>t/Suchbegriff (z.B. Bauvorhaben)</div>
<div class="sk" style="left:708px;top:282px;width:376px;height:20px;background:#fff"></div>
<div class="t" style="left:711px;top:286.82px;font-size:10.85px;line-height:10.85px;color:#000;transform:scaleX(0.96);transform-origin:0 0">Beispielangebot 1</div>
<div class="a" style="left:795px;top:285px;width:1px;height:13px;background:#000"></div>
<div class="t" style="left:707px;top:309.82px;font-size:10.85px;line-height:10.85px;color:#000;"><u>L</u>ieferhinweis/Versandtext</div>
<div class="sk" style="left:708px;top:324px;width:376px;height:20px;background:#fff"></div>
<div class="t" style="left:707px;top:355.82px;font-size:10.85px;line-height:10.85px;color:#000;"><u>A</u>nlage nachschlagen *</div>
<div class="t" style="left:912px;top:355.82px;font-size:10.85px;line-height:10.85px;color:#000;"><u>O</u>bjektadresse nachschlagen *</div>
<div class="sk" style="left:708px;top:370px;width:196px;height:21px;background:#fff"></div>
<div class="sk" style="left:912px;top:370px;width:172px;height:21px;background:#fff"></div>
<div class="cb" style="left:1065px;top:372px;width:17px;height:17px"></div>
<svg class="a" style="left:1070px;top:379px" width="7" height="4" viewBox="0 0 7 4"><path d="M0 0H7L3.5 4Z" fill="#000"/></svg>
<div class="t" style="left:707px;top:399.82px;font-size:10.85px;line-height:10.85px;color:#000;">Anrede, Name, Ansprechpartner</div>
<div class="sk" style="left:708px;top:414px;width:248px;height:20px;background:#fff"></div>
<div class="sk" style="left:964px;top:415px;width:13px;height:13px;background:#fff"></div>
<div class="t" style="left:982px;top:416.82px;font-size:10.85px;line-height:10.85px;color:#000;">Objektadresse fest</div>
<div class="sk" style="left:708px;top:434px;width:248px;height:46px;background:#fff"></div>
<div class="sk" style="left:708px;top:480px;width:248px;height:21px;background:#fff"></div>
<div class="cb" style="left:937px;top:482px;width:17px;height:17px"></div>
<svg class="a" style="left:942px;top:489px" width="7" height="4" viewBox="0 0 7 4"><path d="M0 0H7L3.5 4Z" fill="#000"/></svg>
<div class="btn" style="left:964px;top:458px;width:120px;height:40px;border-color:#fff #696969 #696969 #fff;box-shadow:inset -1px -1px 0 #a0a0a0, inset 1px 1px 0 #e3e3e3"></div>
<div class="t" style="left:964px;width:120px;text-align:center;top:467.32px;font-size:10.85px;line-height:10.85px;color:#838383;">Als Stammanlage</div>
<div class="t" style="left:964px;width:120px;text-align:center;top:479.82px;font-size:10.85px;line-height:10.85px;color:#838383;">speichern...</div>
<div class="t" style="left:707px;top:507.82px;font-size:10.85px;line-height:10.85px;color:#000;">Straße, PLZ, Ort</div>
<div class="sk" style="left:708px;top:522px;width:376px;height:20px;background:#fff"></div>
<div class="sk" style="left:708px;top:542px;width:68px;height:20px;background:#fff"></div>
<div class="sk" style="left:776px;top:542px;width:308px;height:20px;background:#fff"></div>
<div class="t" style="left:707px;top:571.82px;font-size:10.85px;line-height:10.85px;color:#000;">P<u>e</u>rsonal</div>
<div class="t" style="left:808px;top:571.82px;font-size:10.85px;line-height:10.85px;color:#000;">Termi<u>n</u> *</div>
<div class="t" style="left:912px;top:571.82px;font-size:10.85px;line-height:10.85px;color:#000;">Einplanen</div>
<div class="sk" style="left:708px;top:586px;width:92px;height:21px;background:#fff"></div>
<div class="cb" style="left:781px;top:588px;width:17px;height:17px"></div>
<svg class="a" style="left:786px;top:595px" width="7" height="4" viewBox="0 0 7 4"><path d="M0 0H7L3.5 4Z" fill="#000"/></svg>
<div class="sk" style="left:808px;top:586px;width:96px;height:21px;background:#fff"></div>
<div class="sk" style="left:912px;top:586px;width:172px;height:21px;background:#f0f0f0"></div>
<div class="cb" style="left:1065px;top:588px;width:17px;height:17px"></div>
<svg class="a" style="left:1070px;top:595px" width="7" height="4" viewBox="0 0 7 4"><path d="M0 0H7L3.5 4Z" fill="#a0a0a0"/></svg>
<div class="t" style="left:916px;top:590.82px;font-size:10.85px;line-height:10.85px;color:#8a8a8a;">&lt;Nein&gt;</div>
<div class="t" style="left:707px;top:619.82px;font-size:10.85px;line-height:10.85px;color:#000;"><u>S</u>chlußbemerkungen *</div>
<div class="sk" style="left:708px;top:634px;width:376px;height:60px;background:#fff"></div>
<div class="btn" style="left:708px;top:702px;width:184px;height:24px;border:1px solid #000;box-shadow:inset 1px 1px 0 #fff, inset -1px -1px 0 #696969, inset 2px 2px 0 #e3e3e3, inset -2px -2px 0 #a0a0a0"></div>
<div class="t" style="left:708px;width:184px;text-align:center;top:708.82px;font-size:10.85px;line-height:10.85px;color:#000;">OK</div>
<svg class="a" style="left:776px;top:703px" width="46" height="22" viewBox="0 0 46 22"><ellipse cx="23" cy="11" rx="20.5" ry="8.6" fill="none" stroke="#e81123" stroke-width="2.2"/></svg>
<div class="btn" style="left:900px;top:702px;width:184px;height:24px;border-color:#fff #696969 #696969 #fff;box-shadow:inset -1px -1px 0 #a0a0a0, inset 1px 1px 0 #e3e3e3"></div>
<div class="t" style="left:900px;width:184px;text-align:center;top:708.82px;font-size:10.85px;line-height:10.85px;color:#000;">Abbrechen</div>
</body></html>
